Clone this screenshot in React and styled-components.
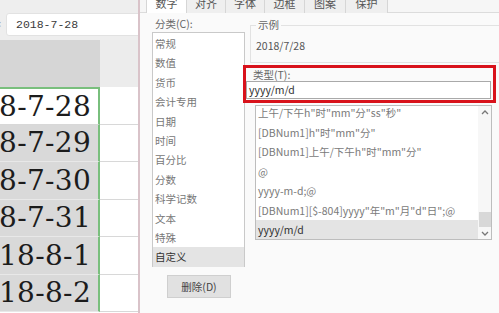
import styled, { createGlobalStyle } from 'styled-components';

const GlobalStyle = createGlobalStyle`
  html, body {
    margin: 0;
    padding: 0;
    width: 499px;
    height: 313px;
    overflow: hidden;
    background: #fafafa;
  }
  * {
    box-sizing: border-box;
  }
`;

const UI_FONT = `"Noto Sans CJK SC", "Noto Sans", sans-serif`;

const Screen = styled.div`
  display: flex;
  width: 499px;
  height: 313px;
  overflow: hidden;
`;

/* ---------- spreadsheet ---------- */

const Sheet = styled.section`
  width: 138px;
  flex: none;
  display: flex;
  flex-direction: column;
  background: #fff;
`;

const FormulaBar = styled.div`
  height: 40px;
  display: flex;
  align-items: flex-start;
  padding: 13px 0 0 0;
  background: #eeeeee;
  overflow: hidden;
`;

const FxMark = styled.span`
  width: 11px;
  margin-left: -5px;
  font: 11px "Liberation Sans", sans-serif;
  color: #999;
  line-height: 23px;
`;

const FormulaInput = styled.div`
  flex: 1;
  height: 23px;
  margin-right: -4px;
  padding-left: 9px;
  background: #fff;
  border: 1px solid #e2e2e2;
  border-radius: 3px;
  font: 500 11.5px "Liberation Mono", monospace;
  line-height: 21px;
  color: #3a3a3a;
`;

const HeaderRow = styled.div`
  height: 47px;
  display: flex;
`;

const HeaderCell = styled.div`
  width: ${(p) => (p.$wide ? '100px' : 'auto')};
  flex: ${(p) => (p.$wide ? 'none' : '1')};
  background: ${(p) => (p.$wide ? '#d6d6d6' : '#ececec')};
`;

const Row = styled.div`
  height: 37.5px;
  display: flex;
  flex: none;
`;

const DateCell = styled.div`
  width: 100px;
  flex: none;
  display: flex;
  justify-content: flex-end;
  align-items: center;
  padding-right: 7px;
  overflow: hidden;
  white-space: nowrap;
  background: ${(p) => (p.$active ? '#fff' : '#d9d9d9')};
  border-right: 2px solid #79bf7d;
  border-top: ${(p) => (p.$first ? '2px solid #79bf7d' : 'none')};
  border-bottom: 1px solid ${(p) => (p.$active ? '#d8d8d8' : '#e8e8e8')};
  font: 28px "DejaVu Serif", "Liberation Serif", serif;
  color: #1c1c1c;
  letter-spacing: 0.3px;
`;

const EmptyCell = styled.div`
  flex: 1;
  border-bottom: 1px solid #d8d8d8;
`;

const DialogEdge = styled.div`
  width: 2px;
  flex: none;
  background: #d9c3c9;
`;

/* ---------- format dialog ---------- */

const Dialog = styled.section`
  flex: 1;
  display: flex;
  flex-direction: column;
  background: #fafafa;
  font-family: ${UI_FONT};
  font-size: 10.5px;
  color: #666;
`;

const TabBar = styled.div`
  height: 13px;
  display: flex;
  padding-left: 6px;
  border-bottom: 1px solid #dcdcdc;
  background: #f6f6f6;
`;

const Tab = styled.div`
  width: ${(p) => p.$w}px;
  height: 13px;
  display: flex;
  justify-content: center;
  align-items: flex-end;
  overflow: hidden;
  background: ${(p) => (p.$selected ? '#fff' : '#efefef')};
  border-right: 1px solid #d6d6d6;
  border-left: ${(p) => (p.$selected ? '1px solid #d6d6d6' : 'none')};
  color: #555;
  font-size: 11px;

  span {
    display: block;
    line-height: 16px;
    padding-bottom: 2px;
  }
`;

const Body = styled.div`
  flex: 1;
  display: flex;
  padding-left: 12px;
  gap: 5px;
`;

const LeftColumn = styled.div`
  width: 93px;
  flex: none;
  display: flex;
  flex-direction: column;
`;

const Label = styled.div`
  height: ${(p) => p.$h}px;
  line-height: ${(p) => p.$lh || p.$h}px;
  padding-left: 3px;
  color: #666;
`;

const CategoryList = styled.ul`
  list-style: none;
  margin: 0;
  padding: 1px 0 0;
  height: 235px;
  background: #fff;
  border: 1px solid #c9c9c9;
`;

const CategoryItem = styled.li`
  height: 19.4px;
  line-height: 19.4px;
  padding-left: 2px;
  background: ${(p) => (p.$selected ? '#e4e4e4' : 'transparent')};
  color: ${(p) => (p.$selected ? '#333' : '#777')};
`;

const Button = styled.button`
  margin: 8px 0 0 15px;
  width: 64px;
  height: 23px;
  padding: 0;
  background: #e1e1e1;
  border: 1px solid #cfcfcf;
  font: 10.5px ${UI_FONT};
  color: #444;
`;

const RightColumn = styled.div`
  flex: 1;
  display: flex;
  flex-direction: column;
  padding-top: 6px;
  margin-right: -8px;
`;

const SampleBox = styled.fieldset`
  margin: 0;
  height: 44px;
  padding: 0 0 0 5px;
  border: 1px solid #e2e2e2;
  border-right: none;

  legend {
    padding: 0 2px;
    margin-left: 0;
    line-height: 12px;
    color: #666;
  }
`;

const SampleValue = styled.div`
  padding-top: 7px;
  color: #555;
`;

const TypeSection = styled.div`
  position: relative;
  margin-top: 2px;
  width: 241px;
`;

const TypeInput = styled.div`
  margin-left: -4px;
  height: 18px;
  line-height: 16px;
  padding-left: 2px;
  background: #fff;
  border: 1px solid #a9a9a9;
  color: #333;
`;

const Highlight = styled.div`
  position: absolute;
  left: -7px;
  top: 0;
  right: -5px;
  bottom: -4px;
  border: 3px solid #d8121b;
  pointer-events: none;
`;

const FormatList = styled.div`
  position: relative;
  margin-top: 6px;
  margin-left: 5px;
  width: 237px;
  height: 135px;
  background: #fff;
  border: 1px solid #bdbdbd;
  overflow: hidden;
`;

const FormatItems = styled.ul`
  list-style: none;
  margin: -3px 13px 0 0;
  padding: 0;
`;

const FormatItem = styled.li`
  height: 19.5px;
  line-height: 19.5px;
  padding-left: 2px;
  white-space: nowrap;
  background: ${(p) => (p.$selected ? '#e4e4e4' : 'transparent')};
  color: ${(p) => (p.$selected ? '#333' : '#7a7a7a')};
`;

const Scrollbar = styled.div`
  position: absolute;
  top: 0;
  right: 0;
  bottom: 0;
  width: 13px;
  display: flex;
  flex-direction: column;
  justify-content: space-between;
  align-items: center;
  padding: 3px 0 2px;
  background: #f7f7f7;
`;

const Thumb = styled.div`
  width: 12px;
  height: 15px;
  margin-top: auto;
  margin-bottom: 4px;
  background: #d8d8d8;
`;

const Chevron = ({ up }) => (
  <svg width="8" height="6" viewBox="0 0 8 6">
    <path
      d={up ? 'M1 5 L4 2 L7 5' : 'M1 1 L4 4 L7 1'}
      fill="none"
      stroke="#777"
      strokeWidth="1.3"
    />
  </svg>
);

const dates = ['2018-7-28', '2018-7-29', '2018-7-30', '2018-7-31', '2018-8-1', '2018-8-2'];

const tabs = [
  { label: '数字', w: 41 },
  { label: '对齐', w: 39 },
  { label: '字体', w: 39 },
  { label: '边框', w: 40 },
  { label: '图案', w: 41 },
  { label: '保护', w: 42 },
];

const categories = [
  '常规', '数值', '货币', '会计专用', '日期', '时间',
  '百分比', '分数', '科学记数', '文本', '特殊', '自定义',
];

const formats = [
  '上午/下午h"时"mm"分"ss"秒"',
  '[DBNum1]h"时"mm"分"',
  '[DBNum1]上午/下午h"时"mm"分"',
  '@',
  'yyyy-m-d;@',
  '[DBNum1][$-804]yyyy"年"m"月"d"日";@',
  'yyyy/m/d',
];

export default function App() {
  return (
    <>
      <GlobalStyle />
      <Screen>
        <Sheet>
          <FormulaBar>
            <FxMark>×</FxMark>
            <FormulaInput>2018-7-28</FormulaInput>
          </FormulaBar>
          <HeaderRow>
            <HeaderCell $wide />
            <HeaderCell />
          </HeaderRow>
          {dates.map((d, i) => (
            <Row key={d}>
              <DateCell $active={i === 0} $first={i === 0}>{d}</DateCell>
              <EmptyCell />
            </Row>
          ))}
        </Sheet>
        <DialogEdge />
        <Dialog>
          <TabBar>
            {tabs.map((t, i) => (
              <Tab key={t.label} $w={t.w} $selected={i === 0}>
                <span>{t.label}</span>
              </Tab>
            ))}
          </TabBar>
          <Body>
            <LeftColumn>
              <Label $h={19} $lh={21}>分类(C):</Label>
              <CategoryList>
                {categories.map((c) => (
                  <CategoryItem key={c} $selected={c === '自定义'}>{c}</CategoryItem>
                ))}
              </CategoryList>
              <Button>删除(D)</Button>
            </LeftColumn>
            <RightColumn>
              <SampleBox>
                <legend>示例</legend>
                <SampleValue>2018/7/28</SampleValue>
              </SampleBox>
              <TypeSection>
                <Label $h={16} $lh={19}>类型(T):</Label>
                <TypeInput>yyyy/m/d</TypeInput>
                <Highlight />
              </TypeSection>
              <FormatList>
                <FormatItems>
                  {formats.map((f) => (
                    <FormatItem key={f} $selected={f === 'yyyy/m/d'}>{f}</FormatItem>
                  ))}
                </FormatItems>
                <Scrollbar>
                  <Chevron up />
                  <Thumb />
                  <Chevron />
                </Scrollbar>
              </FormatList>
            </RightColumn>
          </Body>
        </Dialog>
      </Screen>
    </>
  );
}
